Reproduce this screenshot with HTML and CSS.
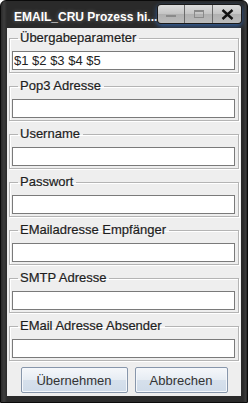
FILE: index.html
```html
<!DOCTYPE html>
<html lang="de">
<head>
    <meta charset="UTF-8">
    <title>EMAIL_CRU Prozess hinzufügen</title>
    <link rel="stylesheet" href="styles.css">
</head>
<body>
    <div class="window">
        <div class="titlebar">
            <span class="title">EMAIL_CRU Prozess hi...</span>
            <div class="controls">
                <span class="ctl ctl-min"><i></i></span>
                <span class="ctl ctl-max"><i></i></span>
                <span class="ctl ctl-close">
                    <svg width="13" height="11" viewBox="0 0 13 11">
                        <path d="M1.5 1 L11.5 10 M11.5 1 L1.5 10" stroke="#111" stroke-width="2.4" fill="none"/>
                    </svg>
                </span>
            </div>
        </div>

        <div class="content">
            <fieldset class="group">
                <legend>Übergabeparameter</legend>
                <input type="text" value="$1 $2 $3 $4 $5">
            </fieldset>
            <fieldset class="group">
                <legend>Pop3 Adresse</legend>
                <input type="text">
            </fieldset>
            <fieldset class="group">
                <legend>Username</legend>
                <input type="text">
            </fieldset>
            <fieldset class="group">
                <legend>Passwort</legend>
                <input type="text">
            </fieldset>
            <fieldset class="group">
                <legend>EMailadresse Empfänger</legend>
                <input type="text">
            </fieldset>
            <fieldset class="group">
                <legend>SMTP Adresse</legend>
                <input type="text">
            </fieldset>
            <fieldset class="group">
                <legend>EMail Adresse Absender</legend>
                <input type="text">
            </fieldset>

            <div class="buttons">
                <button class="btn btn-ok">Übernehmen</button>
                <button class="btn btn-cancel">Abbrechen</button>
            </div>
        </div>
    </div>
</body>
</html>
```

FILE: styles.css
```css
* {
    margin: 0;
    padding: 0;
    box-sizing: border-box;
}
body {
    background: #fff;
    font-family: 'Liberation Sans', Arial, sans-serif;
    width: 248px;
    height: 403px;
    overflow: hidden;
}
.window {
    width: 248px;
    height: 403px;
    display: flex;
    flex-direction: column;
    background: linear-gradient(to right, #2a2a2a, #3c3c3c 3px, #2a2a2a 6px, #2a2a2a 242px, #3c3c3c 245px, #1e1e1e);
    border: 1px solid #0a0a0a;
    border-radius: 6px 6px 0 0;
    padding: 0 6px 6px 6px;
}
.titlebar {
    height: 27px;
    display: flex;
    align-items: flex-start;
    justify-content: space-between;
    flex-shrink: 0;
}
.title {
    color: #fff;
    font-size: 12px;
    font-weight: bold;
    margin: 9px 0 0 7px;
    text-shadow: 0 0 4px rgba(255, 255, 255, 0.35);
    white-space: nowrap;
}
.controls {
    display: flex;
    margin: 3px -1px 0 0;
    border: 1px solid #1a1a1a;
    border-radius: 4px;
    overflow: hidden;
    box-shadow: 0 2px 5px rgba(60, 140, 255, 0.55);
}
.ctl {
    height: 18px;
    display: flex;
    align-items: center;
    justify-content: center;
    background: linear-gradient(#dcdcdc, #c4c4c4 50%, #b0b0b0 51%, #bcbcbc);
    border-left: 1px solid #6a6a6a;
}
.ctl:first-child {
    border-left: none;
}
.ctl-min {
    width: 26px;
}
.ctl-min i {
    width: 10px;
    height: 2px;
    margin-top: 4px;
    background: #8a8a8a;
}
.ctl-max {
    width: 28px;
}
.ctl-max i {
    width: 10px;
    height: 8px;
    border: 1px solid #8a8a8a;
    border-top-width: 2px;
}
.ctl-close {
    width: 29px;
}
.content {
    flex: 1;
    background: #eeeeee;
    padding: 3px 1px 0 1px;
    display: flex;
    flex-direction: column;
}
.group {
    margin: 0 1px 6px 1px;
    padding: 6px 3px 2px 2px;
    border: 1px solid #b4b4b4;
    box-shadow: 1px 1px 0 #fff, inset 1px 1px 0 #fff;
    min-width: 0;
}
.group legend {
    font-size: 13px;
    line-height: 14px;
    color: #1e1e1e;
    padding: 0 3px 0 2px;
    margin-left: 6px;
    -webkit-text-stroke: 0.2px #1e1e1e;
}
.group input {
    display: block;
    width: 100%;
    height: 19px;
    border: 1px solid #7a7a7a;
    background: #fff;
    font-family: 'Liberation Sans', Arial, sans-serif;
    font-size: 13px;
    color: #222;
    padding: 0 1px;
    outline: none;
}
.buttons {
    display: flex;
    justify-content: center;
    gap: 7px;
}
.btn {
    height: 26px;
    border: 1px solid #8796ab;
    border-radius: 2px;
    background: linear-gradient(#f5f7fa, #e6ecf3 50%, #d6e0ec 51%, #cfdbe9);
    box-shadow: inset 0 0 0 1px #f4f7fb;
    font-family: 'Liberation Sans', Arial, sans-serif;
    font-size: 13px;
    color: #333;
}
.btn-ok {
    width: 107px;
}
.btn-cancel {
    width: 93px;
}
```
